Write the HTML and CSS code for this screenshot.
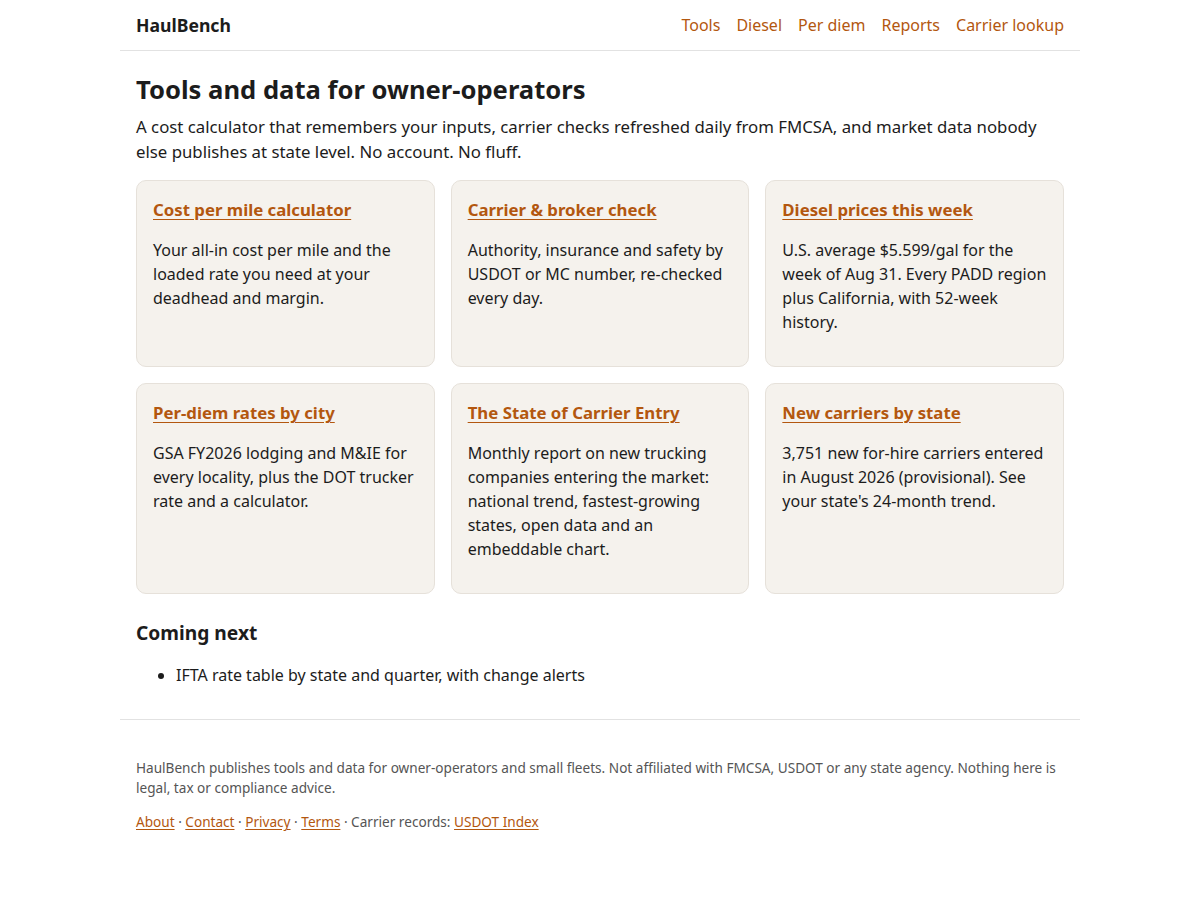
FILE: index.html
```html
<!DOCTYPE html>
<html lang="en">
<head>
<meta charset="utf-8">
<title>HaulBench</title>
<link rel="stylesheet" href="styles.css">
</head>
<body>
<div class="wrap">
  <header class="site-header">
    <a class="brand" href="#">HaulBench</a>
    <nav class="nav">
      <a href="#">Tools</a>
      <a href="#">Diesel</a>
      <a href="#">Per diem</a>
      <a href="#">Reports</a>
      <a href="#">Carrier lookup</a>
    </nav>
  </header>
  <main class="main">
    <h1>Tools and data for owner-operators</h1>
    <p class="lead">A cost calculator that remembers your inputs, carrier checks refreshed daily from FMCSA, and market data nobody else publishes at state level. No account. No fluff.</p>
    <div class="grid">
      <div class="card">
        <h2><a href="#">Cost per mile calculator</a></h2>
        <p>Your all-in cost per mile and the loaded rate you need at your deadhead and margin.</p>
      </div>
      <div class="card">
        <h2><a href="#">Carrier &amp; broker check</a></h2>
        <p>Authority, insurance and safety by USDOT or MC number, re-checked every day.</p>
      </div>
      <div class="card">
        <h2><a href="#">Diesel prices this week</a></h2>
        <p>U.S. average $5.599/gal for the week of Aug 31. Every PADD region plus California, with 52-week history.</p>
      </div>
      <div class="card">
        <h2><a href="#">Per-diem rates by city</a></h2>
        <p>GSA FY2026 lodging and M&amp;IE for every locality, plus the DOT trucker rate and a calculator.</p>
      </div>
      <div class="card">
        <h2><a href="#">The State of Carrier Entry</a></h2>
        <p>Monthly report on new trucking companies entering the market: national trend, fastest-growing states, open data and an embeddable chart.</p>
      </div>
      <div class="card">
        <h2><a href="#">New carriers by state</a></h2>
        <p>3,751 new for-hire carriers entered in August 2026 (provisional). See your state's 24-month trend.</p>
      </div>
    </div>
    <h2 class="section-title">Coming next</h2>
    <ul class="next-list">
      <li>IFTA rate table by state and quarter, with change alerts</li>
    </ul>
  </main>
  <footer class="site-footer">
    <p>HaulBench publishes tools and data for owner-operators and small fleets. Not affiliated with FMCSA, USDOT or any state agency. Nothing here is legal, tax or compliance advice.</p>
    <p><a href="#">About</a> · <a href="#">Contact</a> · <a href="#">Privacy</a> · <a href="#">Terms</a> · Carrier records: <a href="#">USDOT Index</a></p>
  </footer>
</div>
</body>
</html>
```
FILE: styles.css
```css
* { box-sizing: border-box; }
html, body { margin: 0; padding: 0; background: #fff; }
body {
  font-family: "Noto Sans", "DejaVu Sans", sans-serif;
  font-size: 16px;
  line-height: 1.5;
  color: #1c1c1c;
}
a { color: #b3570f; }
.wrap { max-width: 960px; margin: 0 auto; }
.site-header {
  display: flex;
  justify-content: space-between;
  align-items: center;
  height: 51px;
  padding: 0 16px;
  border-bottom: 1px solid #e2e2e2;
}
.brand { font-weight: 700; font-size: 17.6px; color: #1c1c1c; text-decoration: none; }
.nav { display: flex; gap: 16px; }
.nav a { text-decoration: none; }
.main { padding: 24px 16px 16px; }
h1 { font-size: 25.6px; line-height: 1.2; margin: 0 0 8px; font-weight: 700; }
.lead { font-size: 16.8px; margin: 0 0 16px; line-height: 1.5; }
.grid {
  display: grid;
  grid-template-columns: repeat(3, 1fr);
  gap: 16px;
}
.card {
  background: #f5f2ed;
  border: 1px solid #e6e1da;
  border-radius: 10px;
  padding: 16px;
}
.card h2 { font-size: 16.8px; line-height: 1.5; margin: 0 0 16px; font-weight: 700; }
.card h2 a { text-underline-offset: 3px; }
.card p { margin: 0 0 16px; }
.section-title { font-size: 19.2px; margin: 27px 0 19px; line-height: 1.2; }
.next-list { margin: 0 0 16px; padding-left: 40px; }
.site-footer {
  border-top: 1px solid #e2e2e2;
  padding: 38px 16px 28px;
  font-size: 13.6px;
  color: #555;
  line-height: 20px;
}
.site-footer p { margin: 0 0 14px; }
.site-footer a { text-underline-offset: 2px; }
```
